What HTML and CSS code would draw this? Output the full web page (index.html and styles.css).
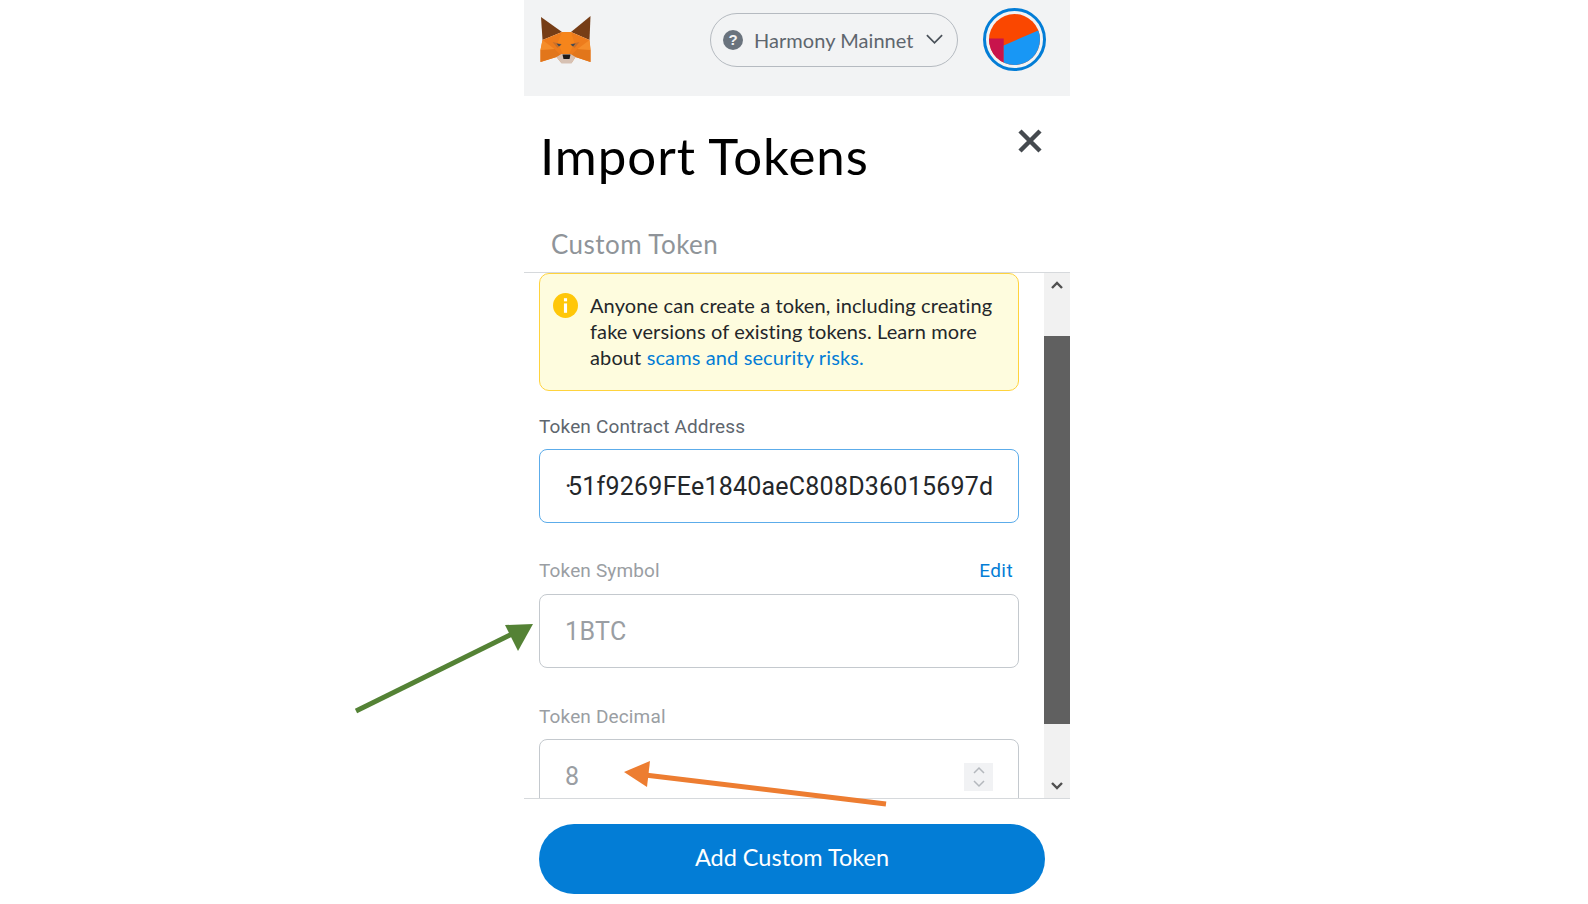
FILE: index.html
```html
<!DOCTYPE html>
<html lang="en">
<head>
<meta charset="utf-8">
<title>Import Tokens</title>
<link rel="stylesheet" href="styles.css">
</head>
<body>
<div class="panel">
  <header class="topbar">
    <svg class="fox" viewBox="0 0 50 48" aria-hidden="true">
      <polygon points="0.500,1 21.500,16 2,24" fill="#763d16"/>
      <polygon points="50,0 30.500,16 49,24" fill="#763d16"/>
      <polygon points="2,24 21.500,16 30.500,16 49,24 50,34 50,46 35,41 31,47 21,47 16,41 0,46 0,34" fill="#ee7c1c"/>
      <polygon points="21.500,16 30.500,16 34,27 28,39 23,39 17,27" fill="#f6851b"/>
      <polygon points="0,34 14,33 20,39 16,41 0,46" fill="#e2761b"/>
      <polygon points="50,34 37,33 31,39 35,41 50,46" fill="#e2761b"/>
      <polygon points="2,24 14,33 0,34" fill="#f58d2a"/>
      <polygon points="49,24 37,33 50,34" fill="#f58d2a"/>
      <polygon points="12,26 21,28 17,32" fill="#c9702a"/>
      <polygon points="39,26 30,28 34,32" fill="#c9702a"/>
      <polygon points="16,27.500 21,28.500 18.500,30.500" fill="#3e4a55"/>
      <polygon points="35,27.500 30,28.500 32.500,30.500" fill="#3e4a55"/>
      <polygon points="16,41 21,38 30,38 35,41 31,47.500 21,47.500" fill="#d7c1b3"/>
      <polygon points="22,38.500 30,38.500 29,43 23,43" fill="#1f1a17"/>
    </svg>
    <div class="network">
      <svg class="net-icon" viewBox="0 0 20 20" aria-hidden="true">
        <circle cx="10" cy="10" r="10" fill="#6a737d"/>
        <text x="10" y="15" text-anchor="middle" class="net-q">?</text>
      </svg>
      <span class="net-name">Harmony Mainnet</span>
      <svg class="net-caret" viewBox="0 0 20 12" aria-hidden="true">
        <path d="M2 2 L10 10 L18 2" fill="none" stroke="#4a5159" stroke-width="1.800"/>
      </svg>
    </div>
    <div class="avatar">
      <svg viewBox="0 0 52 52" aria-hidden="true">
        <defs><clipPath id="disc"><circle cx="26" cy="26" r="26"/></clipPath></defs>
        <g clip-path="url(#disc)">
          <rect width="52" height="52" fill="#fa4700"/>
          <rect x="0" y="25" width="15" height="27" fill="#c8144c"/>
          <polygon points="15,32 52,16 52,52 15,52" fill="#1897f5"/>
        </g>
      </svg>
    </div>
  </header>

  <div class="title-row">
    <h1 class="title">Import Tokens</h1>
    <svg class="close" viewBox="0 0 24 24" aria-hidden="true">
      <path d="M2 2 L22 22 M22 2 L2 22" stroke="#454a4f" stroke-width="4.500" fill="none"/>
    </svg>
  </div>

  <div class="tabs"><span class="tab">Custom Token</span></div>

  <div class="scroller">
    <div class="form">
      <div class="warning">
        <svg class="info" viewBox="0 0 24 24" aria-hidden="true">
          <circle cx="12" cy="12" r="12" fill="#ffc70a"/>
          <rect x="10.500" y="10" width="3" height="9" fill="#fff"/>
          <rect x="10.500" y="5" width="3" height="3" fill="#fff"/>
        </svg>
        <p class="warning-text">Anyone can create a token, including creating fake versions of existing tokens. Learn more about <a class="link">scams and security risks.</a></p>
      </div>

      <div class="label-row first"><span class="label">Token Contract Address</span></div>
      <div class="field focused"><span class="value"><span class="dot">·</span>51f9269FEe1840aeC808D36015697d</span></div>

      <div class="label-row"><span class="label muted">Token Symbol</span><a class="edit">Edit</a></div>
      <div class="field"><span class="value muted">1BTC</span></div>

      <div class="label-row decimal"><span class="label muted">Token Decimal</span></div>
      <div class="field">
        <span class="value muted">8</span>
        <div class="spinner">
          <svg viewBox="0 0 14 24" aria-hidden="true">
            <path d="M2 8 L7 3 L12 8 M2 16 L7 21 L12 16" fill="none" stroke="#b4b8bd" stroke-width="1.500"/>
          </svg>
        </div>
      </div>
    </div>
    <div class="scrollbar">
      <div class="sb-btn"><svg viewBox="0 0 14 10" aria-hidden="true"><path d="M2 8 L7 3 L12 8" fill="none" stroke="#505050" stroke-width="2.400"/></svg></div>
      <div class="sb-thumb"></div>
      <div class="sb-btn bottom"><svg viewBox="0 0 14 10" aria-hidden="true"><path d="M2 2 L7 7 L12 2" fill="none" stroke="#505050" stroke-width="2.400"/></svg></div>
    </div>
  </div>

  <footer class="footer">
    <button class="add">Add Custom Token</button>
  </footer>
</div>

<svg class="arrows" viewBox="0 0 1588 904" aria-hidden="true">
  <line x1="356" y1="711" x2="516" y2="632" stroke="#548235" stroke-width="5"/>
  <polygon points="533,624 505,625 518,651" fill="#548235"/>
  <line x1="886" y1="804" x2="645" y2="775" stroke="#ed7d31" stroke-width="5"/>
  <polygon points="624,772 650,761 647,787" fill="#ed7d31"/>
</svg>
</body>
</html>
```
FILE: styles.css
```css
* { box-sizing: border-box; }
html, body { margin: 0; padding: 0; }
body {
  width: 1588px;
  height: 904px;
  overflow: hidden;
  background: #fff;
  font-family: "Lato", "Liberation Sans", sans-serif;
  position: relative;
}
.panel {
  width: 546px;
  height: 904px;
  margin-left: 524px;
  display: flex;
  flex-direction: column;
}
.topbar {
  height: 96px;
  flex: none;
  background: #f2f3f4;
  display: flex;
  align-items: flex-start;
  padding: 16px 24px 0 16px;
}
.fox { width: 51px; height: 48px; flex: none; }
.network {
  margin: -3px 0 0 119px;
  width: 248px;
  height: 54px;
  flex: none;
  border: 1px solid #b5bac0;
  border-radius: 27px;
  display: flex;
  align-items: center;
  padding-left: 12px;
}
.net-icon { width: 20px; height: 20px; flex: none; }
.net-q { font: 700 15px "Liberation Sans", sans-serif; fill: #f2f3f4; }
.net-name {
  margin-left: 11px;
  font-size: 20px;
  letter-spacing: 0.050px;
  color: #5e666e;
  white-space: nowrap;
}
.net-caret { width: 19px; height: 12px; margin-left: 11px; flex: none; margin-top: -3px; }
.avatar {
  margin: -8px 0 0 25px;
  width: 63px;
  height: 63px;
  flex: none;
  border: 3px solid #037dd6;
  border-radius: 50%;
  padding: 3px;
  background: #f2f3f4;
}
.avatar svg { display: block; width: 51px; height: 51px; }
.title-row {
  height: 128px;
  flex: none;
  padding: 30px 0 0 16px;
  display: flex;
  justify-content: space-between;
  align-items: flex-start;
}
.title {
  margin: 0;
  font-size: 51px;
  line-height: 60px;
  letter-spacing: 0.950px;
  font-weight: 400;
  color: #000;
  white-space: nowrap;
}
.close { width: 24px; height: 24px; margin: 3px 28px 0 0; flex: none; }
.tabs {
  height: 49px;
  flex: none;
  border-bottom: 1px solid #d6d9dc;
  padding-left: 27px;
}
.tab { font-size: 26px; line-height: 40px; letter-spacing: 0.450px; color: #8f9499; display: block; }
.scroller {
  height: 526px;
  flex: none;
  display: flex;
  overflow: hidden;
  border-bottom: 1px solid #d6d9dc;
}
.form {
  width: 520px;
  flex: none;
  padding: 0 25px 0 15px;
}
.warning {
  height: 118px;
  background: #fefcde;
  border: 1px solid #ffd33d;
  border-radius: 10px;
  display: flex;
  padding: 18px 16px 0 13px;
}
.info { width: 25px; height: 25px; flex: none; margin-top: 1px; }
.warning-text {
  margin: 0 0 0 12px;
  font-size: 20px;
  line-height: 26px;
  letter-spacing: 0.120px;
  color: #24272a;
}
.link, .edit { color: #037dd6; }
.label-row {
  display: flex;
  justify-content: space-between;
  height: 35px;
  margin-top: 36px;
  padding: 0 6px 0 0;
  align-items: flex-start;
}
.label-row.first { margin-top: 24px; height: 34px; }
.label-row.decimal { margin-top: 37px; height: 34px; }
.label { font: 400 19px/24px "Roboto", sans-serif; letter-spacing: 0.150px; color: #5e666e; }
.edit { font: 400 19px/24px "Roboto", sans-serif; letter-spacing: 0.400px; }
.muted { color: #9a9ea3; }
.field {
  height: 74px;
  border: 1px solid #c4c9ce;
  border-radius: 8px;
  background: #fff;
  display: flex;
  align-items: center;
  justify-content: space-between;
  padding: 2px 25px 0 25px;
  flex: none;
}
.field.focused { border-color: #5cacea; }
.value {
  font: 400 25px/30px "Roboto", sans-serif;
  letter-spacing: 0.230px;
  color: #24272a;
  white-space: nowrap;
}
.dot { letter-spacing: -3.500px; }
.value.muted { color: #9a9ea3; letter-spacing: 0.400px; }
.spinner {
  width: 29px;
  height: 28px;
  background: #f1f2f4;
  display: flex;
  align-items: center;
  justify-content: center;
}
.spinner svg { width: 14px; height: 24px; display: block; }
.scrollbar {
  width: 26px;
  flex: none;
  background: #f1f1f1;
  display: flex;
  flex-direction: column;
}
.sb-btn { height: 63px; display: flex; justify-content: center; padding-top: 7px; flex: none; }
.sb-btn svg { width: 14px; height: 10px; }
.sb-btn.bottom { height: 74px; align-items: flex-end; padding: 0 0 7px; }
.sb-thumb { height: 388px; background: #606060; flex: none; }
.footer { padding: 25px 0 0 15px; flex: none; }
.add {
  display: block;
  width: 506px;
  height: 70px;
  border: 0;
  border-radius: 35px;
  padding: 0 0 5px;
  background: #037dd6;
  color: #fff;
  font-family: "Lato", sans-serif;
  font-size: 23.500px;
}
.arrows {
  position: absolute;
  left: 0;
  top: 0;
  width: 1588px;
  height: 904px;
  pointer-events: none;
}
```
